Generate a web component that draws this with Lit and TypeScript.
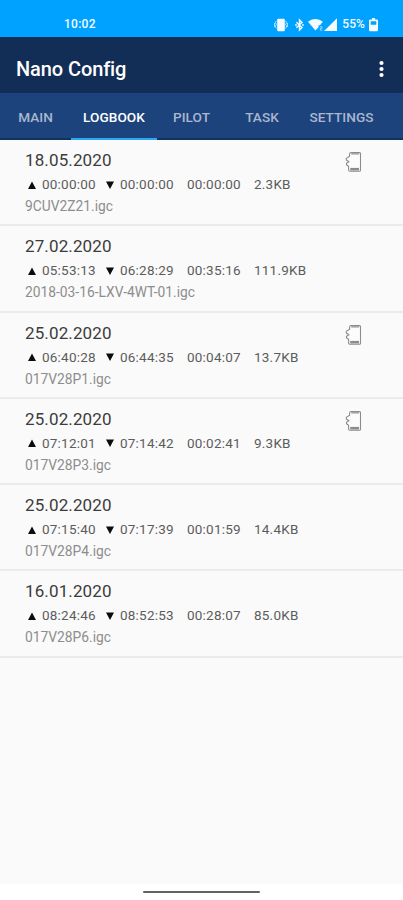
import { LitElement, html, css, svg, nothing } from "lit";
import { customElement, property, state } from "lit/decorators.js";
import { classMap } from "lit/directives/class-map.js";

interface Flight {
  date: string;
  takeoff: string;
  landing: string;
  duration: string;
  size: string;
  file: string;
  card: boolean;
}

const FLIGHTS: Flight[] = [
  { date: "18.05.2020", takeoff: "00:00:00", landing: "00:00:00", duration: "00:00:00", size: "2.3KB", file: "9CUV2Z21.igc", card: true },
  { date: "27.02.2020", takeoff: "05:53:13", landing: "06:28:29", duration: "00:35:16", size: "111.9KB", file: "2018-03-16-LXV-4WT-01.igc", card: false },
  { date: "25.02.2020", takeoff: "06:40:28", landing: "06:44:35", duration: "00:04:07", size: "13.7KB", file: "017V28P1.igc", card: true },
  { date: "25.02.2020", takeoff: "07:12:01", landing: "07:14:42", duration: "00:02:41", size: "9.3KB", file: "017V28P3.igc", card: true },
  { date: "25.02.2020", takeoff: "07:15:40", landing: "07:17:39", duration: "00:01:59", size: "14.4KB", file: "017V28P4.igc", card: false },
  { date: "16.01.2020", takeoff: "08:24:46", landing: "08:52:53", duration: "00:28:07", size: "85.0KB", file: "017V28P6.igc", card: false },
];

const TABS = ["MAIN", "LOGBOOK", "PILOT", "TASK", "SETTINGS"];

@customElement("status-bar")
class StatusBar extends LitElement {
  static styles = css`
    :host {
      display: flex;
      box-sizing: border-box;
      height: 37px;
      padding: 12px 25px 0 64px;
      justify-content: space-between;
      background: #00a2ff;
      color: #f4fbff;
      font-size: 12px;
      font-weight: 500;
      line-height: 25px;
    }
    .time { letter-spacing: 0.25px; }
    .right { display: flex; align-items: center; height: 25px; }
    .battery { letter-spacing: 0.1px; margin: 0 4px 0 5px; }
    svg { display: block; fill: currentColor; }
    .bt { margin-left: 7px; }
    .wifi { margin-left: 4px; }
    .cell { margin-left: 0; }
  `;

  render() {
    return html`
      <span class="time">10:02</span>
      <div class="right">
        <svg width="14" height="14" viewBox="0 0 14 14">
          <rect x="3.200" y=".8" width="7.600" height="12.400" rx="1" />
          <path d="M2.400 2.800 1.400 4.600 2.400 6.400 1.400 8.200 2.400 10.400M11.600 2.800l1 1.800-1 1.800 1 1.800-1 2.200M.4 5v4M13.600 5v4" fill="none" stroke="currentColor" stroke-width="1" stroke-opacity=".75" />
        </svg>
        <svg class="bt" width="9" height="14" viewBox="0 0 9 14">
          <path d="M1.400 4.200 7 9.600 4.500 12V2L7 4.400 1.400 9.800" fill="none" stroke="currentColor" stroke-width="1.400" />
          <circle cx="1" cy="7" r=".9" /><circle cx="8" cy="7" r=".9" />
        </svg>
        <svg class="wifi" width="16" height="14" viewBox="0 0 16 14">
          <path d="M0 3.800C4-.1 10.800-.1 14.800 3.800L12 7.300H10.600V9.200L7.400 12.600Z" />
          <path d="M12 8.700h2v1.700h-1.700v1.800h2" fill="none" stroke="currentColor" stroke-width=".8" stroke-opacity=".7" />
        </svg>
        <svg class="cell" width="13" height="14" viewBox="0 0 13 14"><path d="M13 .2V13H0Z" /></svg>
        <span class="battery">55%</span>
        <svg width="9" height="14" viewBox="0 0 9 14">
          <path fill-rule="evenodd" d="M3 0h3v1.400h1.800q1.200 0 1.200 1.200v9.400q0 1.200-1.200 1.200H1.200q-1.200 0-1.200-1.200V2.600q0-1.200 1.200-1.200H3ZM1.700 3.200v3.600h5.600V3.200Z" />
        </svg>
      </div>
    `;
  }
}

@customElement("flight-row")
class FlightRow extends LitElement {
  @property({ attribute: false }) flight!: Flight;

  static styles = css`
    :host {
      display: flex;
      box-sizing: border-box;
      height: 86.25px;
      padding: 9px 41px 0 25px;
      justify-content: space-between;
      border-bottom: 2px solid #ebebeb;
    }
    .date {
      font-size: 17px;
      line-height: 22px;
      letter-spacing: 0.12px;
      color: #3c3c3c;
    }
    .times {
      display: grid;
      grid-template-columns: 17px 61px 17px 67px 67px auto;
      align-items: center;
      height: 20px;
      margin-top: 3px;
      font-size: 13.5px;
      letter-spacing: 0.22px;
      color: #5c5c5c;
      white-space: nowrap;
    }
    .tri { display: block; margin: 1px 0 0 3px; fill: #0c0c0c; }
    .file {
      margin-top: 2px;
      font-size: 13.8px;
      line-height: 20px;
      color: #8d8d8d;
    }
    .card { display: block; margin-top: 2px; }
  `;

  render() {
    const f = this.flight;
    return html`
      <div>
        <div class="date">${f.date}</div>
        <div class="times">
          <svg class="tri" width="8" height="8" viewBox="0 0 8 8"><path d="M0 8 4 .5 8 8Z" /></svg>
          <span>${f.takeoff}</span>
          <svg class="tri" width="8" height="8" viewBox="0 0 8 8"><path d="M0 .5H8L4 8Z" /></svg>
          <span>${f.landing}</span>
          <span>${f.duration}</span>
          <span>${f.size}</span>
        </div>
        <div class="file">${f.file}</div>
      </div>
      ${f.card
        ? html`<svg class="card" width="17" height="22" viewBox="0 0 17 22">
            <path d="M6.200 1.500h8.300q1 0 1 1V19.300q0 1-1 1H4.800q-1.200 0-1.200-1.200V15.200L1.500 13.800V12.200L4 10.800 1.300 9V7.400L4.600 5.200V3q0-1.500 1.600-1.500Z" fill="#fcfcfc" stroke="#8c8c8c" stroke-width="1.100" stroke-linejoin="round" />
            <path d="M6.200 2.800h8" stroke="#a6a6a6" stroke-width="1.600" />
            <path d="M5.200 18.200h8.800" stroke="#8c8c8c" stroke-width="2.600" />
          </svg>`
        : nothing}
    `;
  }
}

@customElement("app-root")
class AppRoot extends LitElement {
  @state() private active = "LOGBOOK";

  static styles = css`
    :host {
      display: flex;
      flex-direction: column;
      height: 900px;
      overflow: hidden;
      background: #fafafa;
      font-family: Roboto, "Liberation Sans", sans-serif;
    }
    .bar {
      display: flex;
      align-items: center;
      justify-content: space-between;
      box-sizing: border-box;
      height: 56px;
      padding: 8px 19px 0 16px;
      background: #122d56;
      color: #fff;
    }
    .title { font-size: 20px; font-weight: 500; line-height: 28px; letter-spacing: -0.1px; }
    .more { display: block; fill: #fff; }
    .tabs {
      display: grid;
      grid-template-columns: 71px 86px 69px 72px 105px;
      height: 47px;
      background: #1d437c;
      box-shadow: inset 0 -2px #14305e;
    }
    .tab {
      box-sizing: border-box;
      padding: 1px 0 0;
      text-align: center;
      font-size: 13.6px;
      font-weight: 500;
      letter-spacing: 0.05px;
      line-height: 46px;
      color: #a9b7cf;
      border-bottom: 2px solid transparent;
      height: 47px;
    }
    .tab.on { color: #fff; border-bottom-color: #2fa5f5; }
    .tab:last-child { padding-right: 18px; }
    .list { flex: 1; }
    .nav {
      display: flex;
      justify-content: center;
      box-sizing: border-box;
      height: 16px;
      padding-top: 7px;
      background: #fff;
    }
    .handle { width: 117px; height: 2px; border-radius: 1px; background: #626262; }
  `;

  render() {
    return html`
      <status-bar></status-bar>
      <div class="bar">
        <span class="title">Nano Config</span>
        <svg class="more" width="5" height="18" viewBox="0 0 5 18">
          ${[3, 9, 15].map((y) => svg`<circle cx="2.500" cy=${y} r="2.100" />`)}
        </svg>
      </div>
      <div class="tabs">
        ${TABS.map(
          (t) => html`<div class=${classMap({ tab: true, on: t === this.active })} @click=${() => (this.active = t)}>${t}</div>`
        )}
      </div>
      <div class="list">${FLIGHTS.map((f) => html`<flight-row .flight=${f}></flight-row>`)}</div>
      <div class="nav"><div class="handle"></div></div>
    `;
  }
}
